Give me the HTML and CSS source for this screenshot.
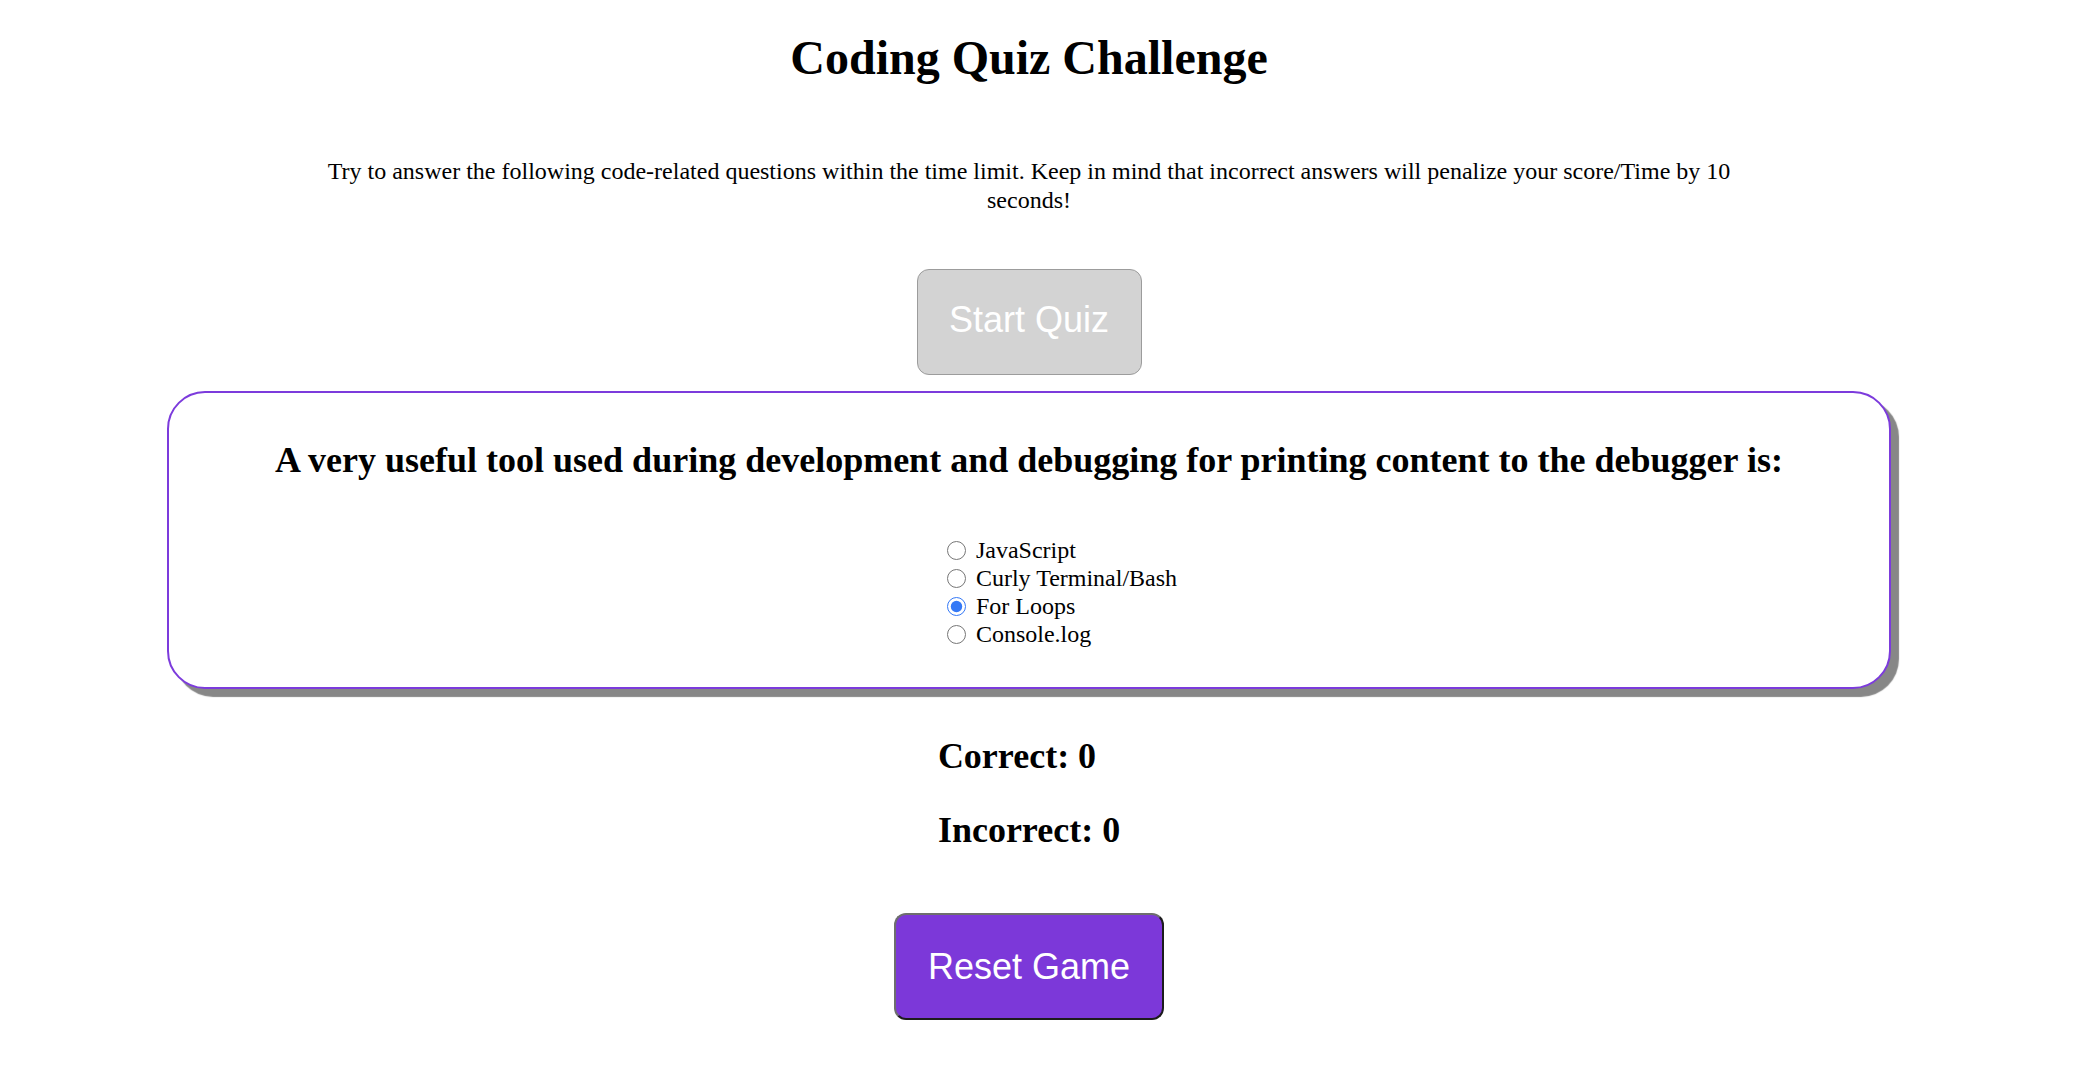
FILE: index.html
```html
<!DOCTYPE html>
<html lang="en">
<head>
<meta charset="utf-8">
<title>Coding Quiz Challenge</title>
<link rel="stylesheet" href="styles.css">
</head>
<body>
<main class="page">
  <h1 class="title">Coding Quiz Challenge</h1>
  <p class="intro">Try to answer the following code-related questions within the time limit. Keep in mind that incorrect answers will penalize your score/Time by 10 seconds!</p>
  <button class="start-btn" type="button">Start Quiz</button>
  <section class="quiz-card">
    <h2 class="question">A very useful tool used during development and debugging for printing content to the debugger is:</h2>
    <div class="options">
      <label class="option"><input type="radio" name="answer" class="radio">JavaScript</label>
      <label class="option"><input type="radio" name="answer" class="radio">Curly Terminal/Bash</label>
      <label class="option"><input type="radio" name="answer" class="radio" checked>For Loops</label>
      <label class="option"><input type="radio" name="answer" class="radio">Console.log</label>
    </div>
  </section>
  <div class="score">
    <h2 class="score-line">Correct: 0</h2>
    <h2 class="score-line">Incorrect: 0</h2>
  </div>
  <button class="reset-btn" type="button">Reset Game</button>
</main>
</body>
</html>
```
FILE: styles.css
```css
html, body {
  margin: 0;
  padding: 0;
  background: #ffffff;
}

body {
  font-family: "Liberation Serif", "Times New Roman", serif;
  font-size: 24px;
  color: #000000;
}

.page {
  display: flex;
  flex-direction: column;
  align-items: center;
  margin-right: 40px;
  text-align: center;
}

.title {
  font-size: 48px;
  font-weight: bold;
  line-height: 55px;
  margin: 30px 0 0;
}

.intro {
  width: 1440px;
  margin: 72px 0 0;
  line-height: 29px;
}

.start-btn {
  margin-top: 54px;
  width: 225px;
  height: 106px;
  background: #d3d3d3;
  color: #ffffff;
  border: 1.5px solid #9c9c9c;
  border-radius: 12px;
  font-family: "Liberation Sans", Arial, sans-serif;
  font-size: 36px;
  padding: 0 0 4px;
}

.quiz-card {
  box-sizing: border-box;
  margin-top: 16px;
  width: 1724px;
  height: 298px;
  border: 2px solid #7c3bdc;
  border-radius: 38px;
  box-shadow: 8px 8px 1px #878787;
  background: #ffffff;
  display: flex;
  flex-direction: column;
  align-items: center;
}

.question {
  font-size: 36px;
  font-weight: bold;
  line-height: 41px;
  margin: 47px 0 0;
}

.options {
  margin-top: 55px;
  padding-left: 68px;
  display: flex;
  flex-direction: column;
  align-items: flex-start;
  text-align: left;
}

.option {
  display: flex;
  align-items: center;
  line-height: 28px;
}

.radio {
  width: 19px;
  height: 19px;
  margin: 1px 10px 0 -2px;
  accent-color: #3478f6;
}

.score {
  margin-top: 47px;
  display: flex;
  flex-direction: column;
  align-items: flex-start;
  text-align: left;
}

.score-line {
  font-size: 36px;
  font-weight: bold;
  line-height: 41px;
  margin: 0;
}

.score-line + .score-line {
  margin-top: 33px;
}

.reset-btn {
  margin-top: 62px;
  width: 270px;
  height: 107px;
  background: #7c38d9;
  color: #ffffff;
  border-style: solid;
  border-width: 2px;
  border-color: #6e6e6e #1c1c1c #1c1c1c #6e6e6e;
  border-radius: 12px;
  font-family: "Liberation Sans", Arial, sans-serif;
  font-size: 36px;
  padding: 0;
}
```
